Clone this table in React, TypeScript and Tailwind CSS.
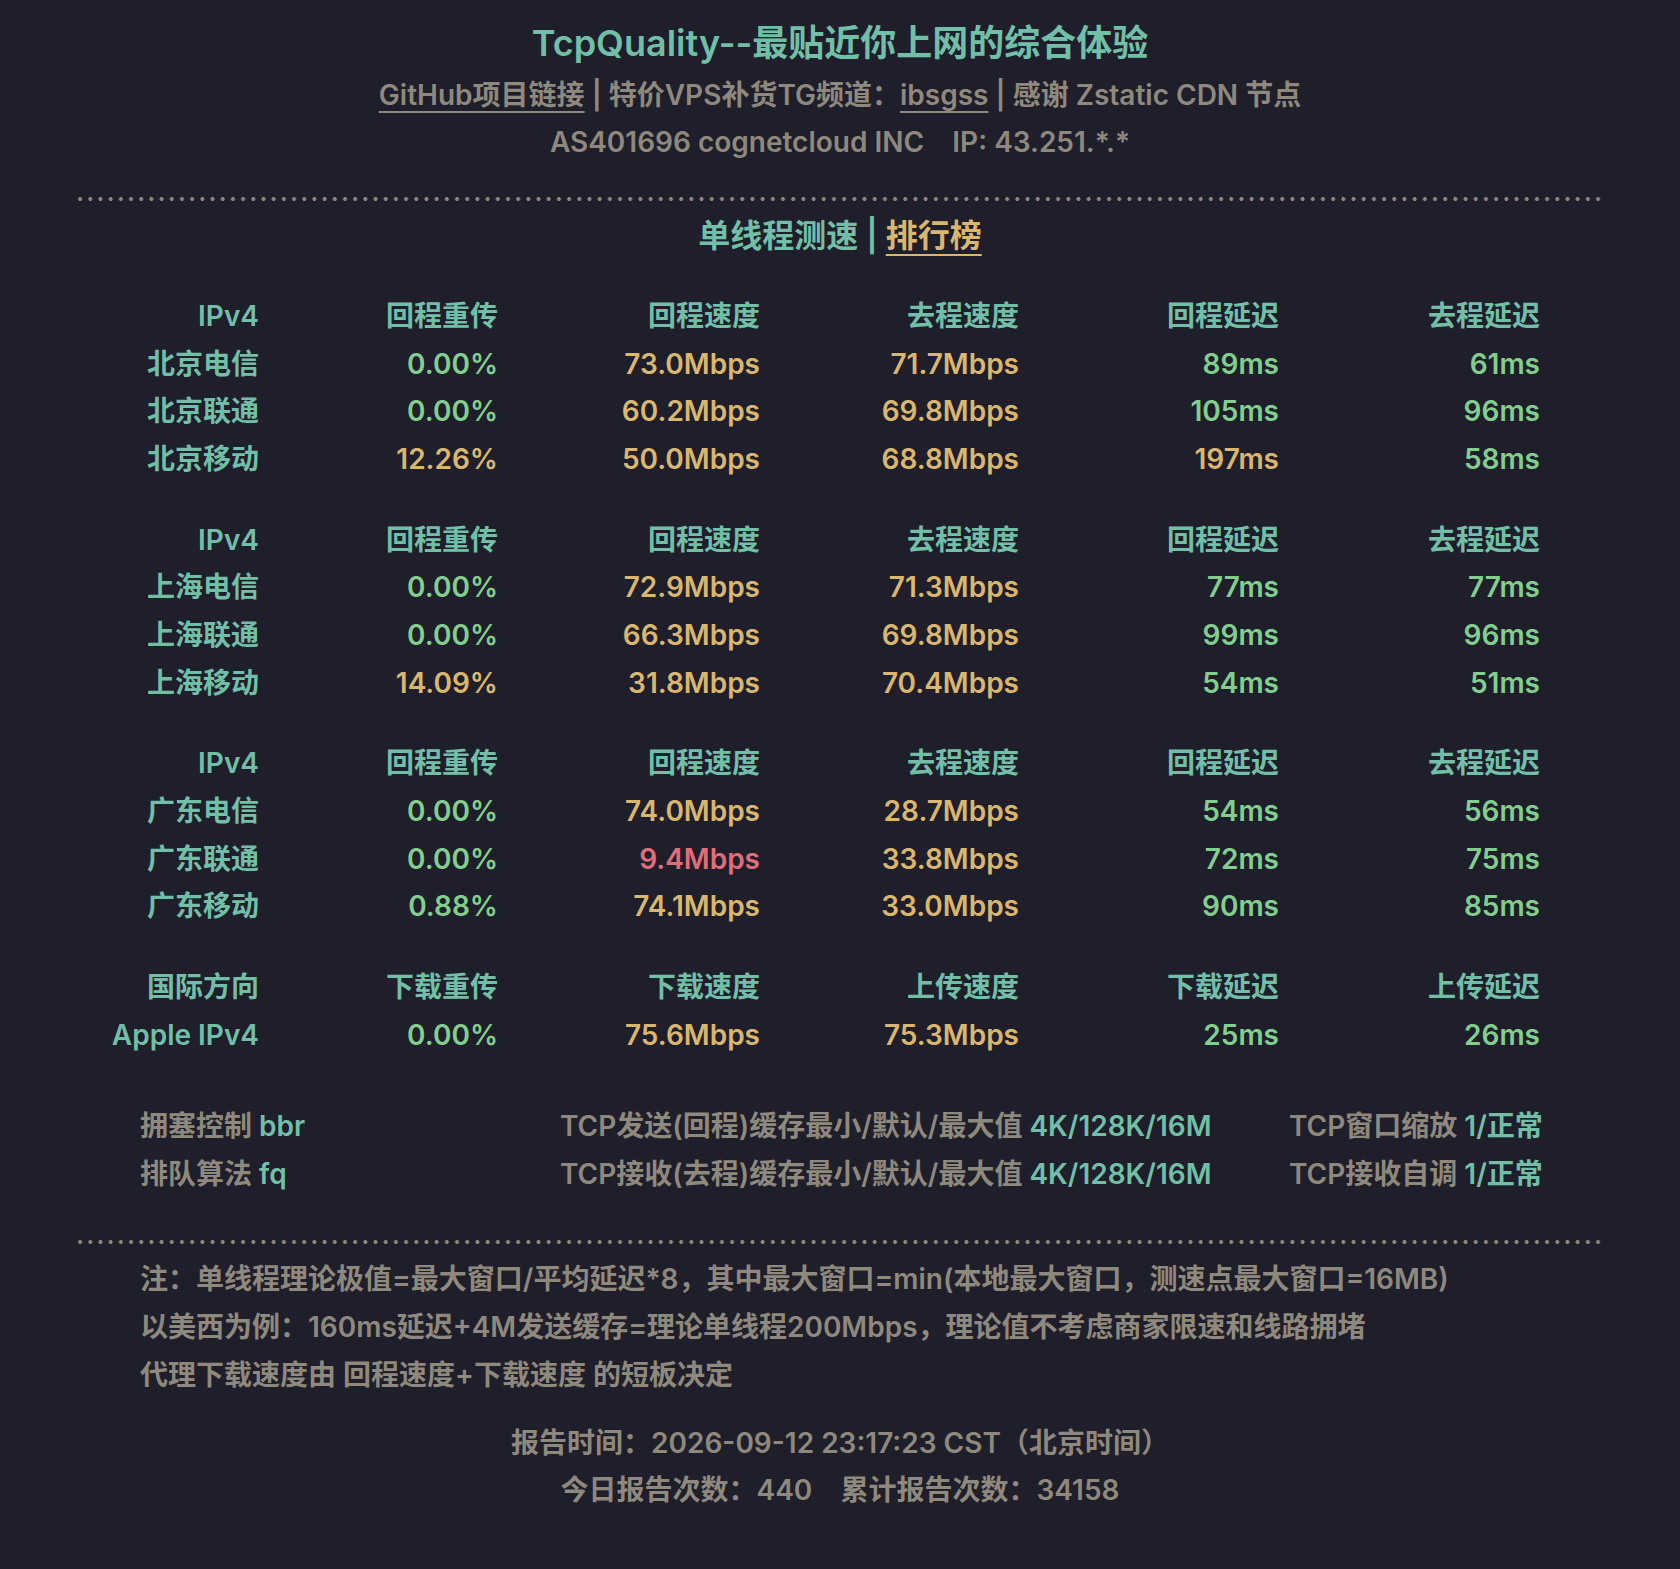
import React from "react";

type Cell = [string, string];

const G = "text-[#82cf8d]";
const Y = "text-[#dbb66d]";
const R = "text-[#e26d78]";

const groups: { head: string[]; rows: [string, Cell[]][] }[] = [
  {
    head: ["IPv4", "回程重传", "回程速度", "去程速度", "回程延迟", "去程延迟"],
    rows: [
      ["北京电信", [["0.00%", G], ["73.0Mbps", Y], ["71.7Mbps", Y], ["89ms", G], ["61ms", G]]],
      ["北京联通", [["0.00%", G], ["60.2Mbps", Y], ["69.8Mbps", Y], ["105ms", G], ["96ms", G]]],
      ["北京移动", [["12.26%", Y], ["50.0Mbps", Y], ["68.8Mbps", Y], ["197ms", Y], ["58ms", G]]],
    ],
  },
  {
    head: ["IPv4", "回程重传", "回程速度", "去程速度", "回程延迟", "去程延迟"],
    rows: [
      ["上海电信", [["0.00%", G], ["72.9Mbps", Y], ["71.3Mbps", Y], ["77ms", G], ["77ms", G]]],
      ["上海联通", [["0.00%", G], ["66.3Mbps", Y], ["69.8Mbps", Y], ["99ms", G], ["96ms", G]]],
      ["上海移动", [["14.09%", Y], ["31.8Mbps", Y], ["70.4Mbps", Y], ["54ms", G], ["51ms", G]]],
    ],
  },
  {
    head: ["IPv4", "回程重传", "回程速度", "去程速度", "回程延迟", "去程延迟"],
    rows: [
      ["广东电信", [["0.00%", G], ["74.0Mbps", Y], ["28.7Mbps", Y], ["54ms", G], ["56ms", G]]],
      ["广东联通", [["0.00%", G], ["9.4Mbps", R], ["33.8Mbps", Y], ["72ms", G], ["75ms", G]]],
      ["广东移动", [["0.88%", G], ["74.1Mbps", Y], ["33.0Mbps", Y], ["90ms", G], ["85ms", G]]],
    ],
  },
  {
    head: ["国际方向", "下载重传", "下载速度", "上传速度", "下载延迟", "上传延迟"],
    rows: [["Apple IPv4", [["0.00%", G], ["75.6Mbps", Y], ["75.3Mbps", Y], ["25ms", G], ["26ms", G]]]],
  },
];

function Dots() {
  return (
    <div className="ml-[75px] w-[1530px] h-[4px] bg-[image:radial-gradient(circle,#8f897d_1.7px,transparent_2.2px)] bg-[length:10.2px_4px] bg-repeat-x" />
  );
}

function Group({ head, rows }: { head: string[]; rows: [string, Cell[]][] }) {
  return (
    <div className="ml-[78px] grid grid-cols-[181px_239px_262px_259px_260px_261px] auto-rows-[47.7px] items-center text-right">
      {head.map((h, i) => (
        <div key={i} className="text-[#72bfa8]">
          {h}
        </div>
      ))}
      {rows.map(([label, cells], r) => (
        <React.Fragment key={r}>
          <div className="text-[#72bfa8]">{label}</div>
          {cells.map(([v, c], i) => (
            <div key={i} className={c}>
              {v}
            </div>
          ))}
        </React.Fragment>
      ))}
    </div>
  );
}

export default function App() {
  return (
    <div className="min-h-screen w-full bg-[#1f1e2b] font-['Inter','Noto_Sans_CJK_SC',sans-serif] font-semibold text-[28px] text-[#8f897d] pt-[19px] pb-[60px]">
      <div className="text-center text-[36px] leading-[48px] text-[#72bfa8]">
        TcpQuality--最贴近你上网的综合体验
      </div>
      <div className="mt-[4px] text-center leading-[48px]">
        <span className="underline decoration-2 underline-offset-[6px]">GitHub项目链接</span>
        <span> | </span>
        <span>特价VPS补货TG频道：</span>
        <span className="underline decoration-2 underline-offset-[6px]">ibsgss</span>
        <span> | </span>
        <span>感谢 Zstatic CDN 节点</span>
      </div>
      <div className="text-center leading-[47px]">
        AS401696 cognetcloud INC&nbsp;&nbsp;&nbsp;&nbsp;IP: 43.251.*.*
      </div>

      <div className="mt-[31px]">
        <Dots />
      </div>

      <div className="mt-[11px] text-center text-[32px] leading-[48px]">
        <span className="text-[#72bfa8]">单线程测速</span>
        <span className="text-[#72bfa8]"> | </span>
        <span className="text-[#dbb66d] underline decoration-2 underline-offset-[7px]">排行榜</span>
      </div>

      <div className="mt-[32px] flex flex-col gap-[33px] leading-[48px]">
        {groups.map((g, i) => (
          <Group key={i} head={g.head} rows={g.rows} />
        ))}
      </div>

      <div className="mt-[44px] ml-[140px] grid grid-cols-[420px_729px_auto] auto-rows-[47.5px] items-center leading-[48px]">
        <div>
          拥塞控制 <span className="text-[#72bfa8]">bbr</span>
        </div>
        <div>
          TCP发送(回程)缓存最小/默认/最大值 <span className="text-[#72bfa8]">4K/128K/16M</span>
        </div>
        <div>
          TCP窗口缩放 <span className="text-[#72bfa8]">1/正常</span>
        </div>
        <div>
          排队算法 <span className="text-[#72bfa8]">fq</span>
        </div>
        <div>
          TCP接收(去程)缓存最小/默认/最大值 <span className="text-[#72bfa8]">4K/128K/16M</span>
        </div>
        <div>
          TCP接收自调 <span className="text-[#72bfa8]">1/正常</span>
        </div>
      </div>

      <div className="mt-[42px]">
        <Dots />
      </div>

      <div className="mt-[11px] ml-[140px] leading-[48px]">
        <div>注：单线程理论极值=最大窗口/平均延迟*8，其中最大窗口=min(本地最大窗口，测速点最大窗口=16MB)</div>
        <div>以美西为例：160ms延迟+4M发送缓存=理论单线程200Mbps，理论值不考虑商家限速和线路拥堵</div>
        <div>代理下载速度由 回程速度+下载速度 的短板决定</div>
      </div>

      <div className="mt-[21px] text-center leading-[47px]">
        <div>报告时间：2026-09-12 23:17:23 CST（北京时间）</div>
        <div>今日报告次数：440&nbsp;&nbsp;&nbsp;&nbsp;累计报告次数：34158</div>
      </div>
    </div>
  );
}
